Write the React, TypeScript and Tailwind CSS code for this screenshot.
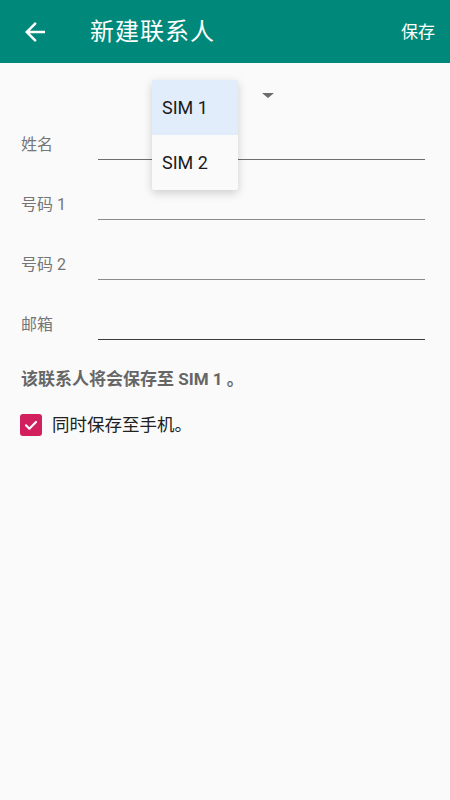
import React from "react";

const font = { fontFamily: 'Roboto, "Noto Sans CJK SC", "Noto Sans", sans-serif' };

function Row({ label, lineClass }: { label: string; lineClass: string }) {
  return (
    <div className="flex h-[60px] items-start">
      <div className="w-[98px] shrink-0 pl-[21px] pt-[10px] text-[16px] leading-[20px] text-[#757575]">{label}</div>
      <div className={`mr-[25px] h-[35px] flex-1 border-b ${lineClass}`} />
    </div>
  );
}

export default function App() {
  return (
    <div className="relative h-[800px] w-[450px] overflow-hidden bg-[#fafafa]" style={font}>
      <div className="flex h-[63px] items-center bg-[#00897b] text-white">
        <div className="ml-[20px] flex h-[30px] w-[30px] items-center justify-center">
          <svg width="30" height="30" viewBox="0 0 24 24" fill="#ffffff">
            <path d="M20 11H7.83l5.59-5.59L12 4l-8 8 8 8 1.41-1.41L7.83 13H20v-2z" />
          </svg>
        </div>
        <div className="ml-[40px] text-[24px] leading-[30px] tracking-[1px] text-[#ffffff]">新建联系人</div>
        <div className="ml-auto mr-[15px] text-[17px] leading-[22px]">保存</div>
      </div>

      <div className="flex h-[62px] items-start">
        <div className="ml-[262px] mt-[30px] h-0 w-0 border-l-[6px] border-r-[6px] border-t-[5px] border-l-transparent border-r-transparent border-t-[#6b6b6b]" />
      </div>

      <Row label="姓名" lineClass="border-[#6e6e6e]" />
      <Row label="号码 1" lineClass="border-[#8a8a8a]" />
      <Row label="号码 2" lineClass="border-[#8a8a8a]" />
      <Row label="邮箱" lineClass="border-[#3a3a3a]" />

      <div className="pl-[21px] pt-[3px] text-[17px] font-bold leading-[22px] text-[#666666]">
        该联系人将会保存至 SIM 1 。
      </div>

      <div className="mt-[24px] flex items-center pl-[20px]">
        <div className="flex h-[22px] w-[22px] items-center justify-center rounded-[3px] bg-[#d21f5e]">
          <svg width="16" height="16" viewBox="0 0 24 24" fill="none" stroke="#ffffff" strokeWidth="3.2" strokeLinecap="round" strokeLinejoin="round">
            <path d="M4.5 12.5l5 5 10-10" />
          </svg>
        </div>
        <div className="ml-[10px] text-[17.5px] leading-[22px] text-[#212121]">同时保存至手机。</div>
      </div>

      <div className="absolute left-[152px] top-[80px] w-[86px] overflow-hidden rounded-[2px] bg-[#fafafa] shadow-[0_3px_10px_rgba(0,0,0,0.18)]">
        <div className="flex h-[55px] items-center bg-[#e1edfb] pl-[10px] text-[18px] text-[#1a1a1a]">SIM 1</div>
        <div className="flex h-[55px] items-center pl-[10px] text-[18px] text-[#1a1a1a]">SIM 2</div>
      </div>
    </div>
  );
}
